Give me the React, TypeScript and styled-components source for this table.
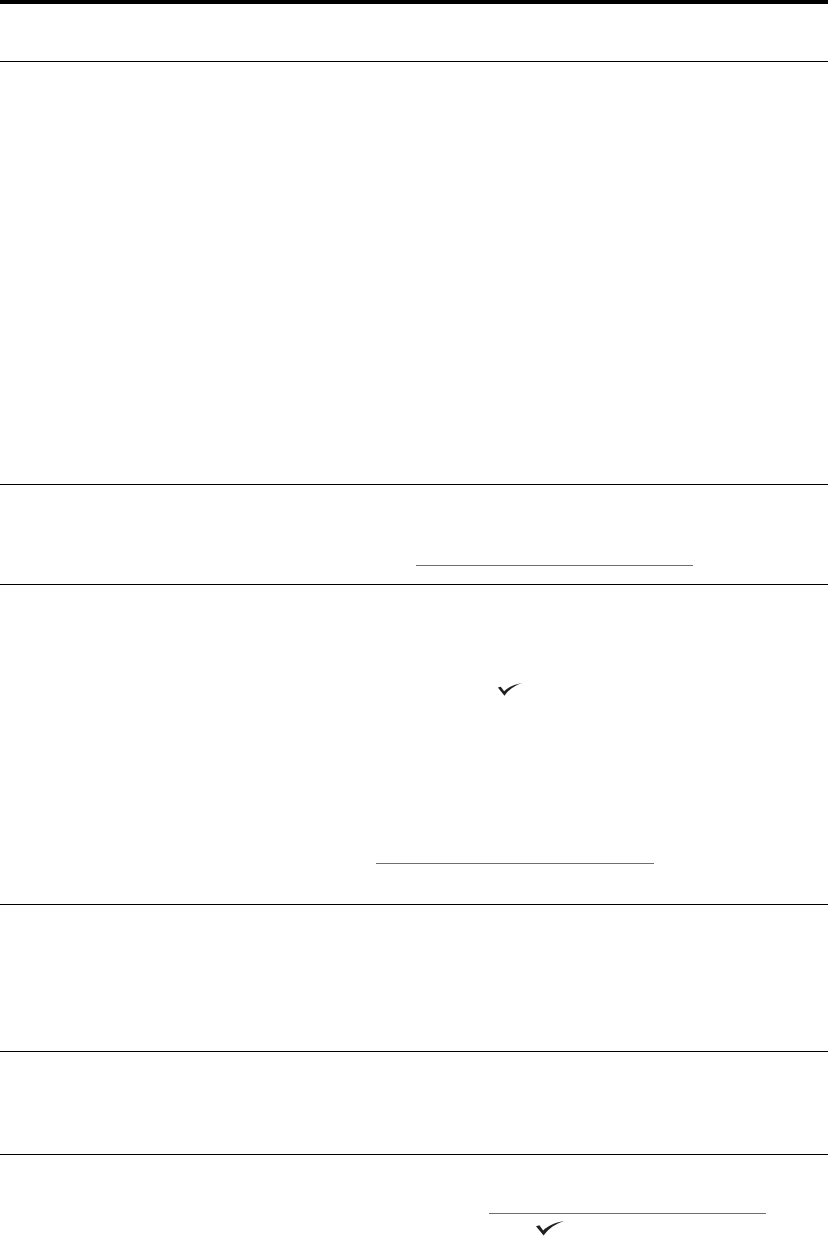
import React from "react";
import styled, { createGlobalStyle } from "styled-components";

const Global = createGlobalStyle`
  html, body { margin: 0; padding: 0; background: #fff; }
  body { font-family: "Liberation Sans", Arial, sans-serif; }
`;

const Page = styled.div`
  width: 828px;
  height: 1237px;
  display: flex;
  flex-direction: column;
  background: #fff;
  overflow: hidden;
`;

const TopBar = styled.div`
  height: 4px;
  background: #000;
  flex: none;
`;

const Section = styled.section<{ $h: number; $pt?: number }>`
  height: ${(p) => p.$h}px;
  flex: none;
  display: flex;
  flex-direction: column;
  align-items: flex-start;
  padding-top: ${(p) => p.$pt ?? 0}px;
  box-sizing: border-box;
  border-bottom: 1.5px solid #000;
`;

const LastSection = styled(Section)`
  border-bottom: none;
  flex: 1;
`;

const Underline = styled.div<{ $x: number; $w: number }>`
  margin-left: ${(p) => p.$x}px;
  width: ${(p) => p.$w}px;
  height: 1px;
  background: #e01fe0;
  flex: none;
`;

const CheckWrap = styled.div<{ $x: number; $mt?: number; $mb?: number }>`
  margin-left: ${(p) => p.$x}px;
  margin-top: ${(p) => p.$mt ?? 0}px;
  margin-bottom: ${(p) => p.$mb ?? 0}px;
  line-height: 0;
  flex: none;
`;

function Check({ w, h }: { w: number; h: number }) {
  return (
    <svg width={w} height={h} viewBox="0 0 28 15" aria-hidden="true">
      <path
        d="M0 5.2 L3.4 4.3 L7.2 9.4 C11.5 5.2 18.5 1.6 28 0 C19.5 2.8 13 7.2 7.6 14.6 Z"
        fill="#231f20"
      />
    </svg>
  );
}

export default function App() {
  return (
    <Page>
      <Global />
      <TopBar />
      <Section $h={58} />
      <Section $h={423} />
      <Section $h={100} $pt={80}>
        <Underline $x={416} $w={277} />
      </Section>
      <Section $h={320} $pt={98}>
        <CheckWrap $x={497} $mb={167}>
          <Check w={26} h={13} />
        </CheckWrap>
        <Underline $x={376} $w={278} />
      </Section>
      <Section $h={147} />
      <Section $h={103} />
      <LastSection $h={82} $pt={58}>
        <Underline $x={489} $w={277} />
        <CheckWrap $x={536} $mt={7}>
          <Check w={28} h={15} />
        </CheckWrap>
      </LastSection>
    </Page>
  );
}
